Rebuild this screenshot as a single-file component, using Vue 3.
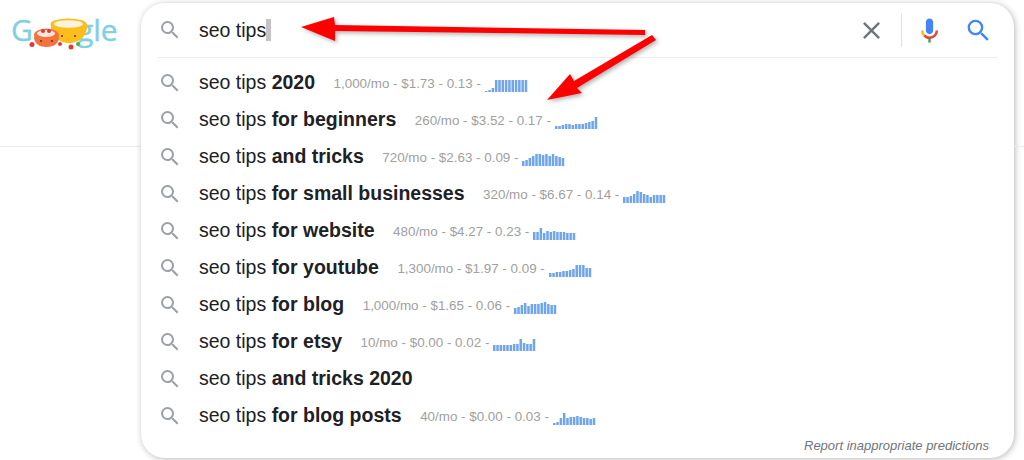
<script setup>
const searchPath = 'M15.5 14h-.79l-.28-.27A6.471 6.471 0 0 0 16 9.5 6.5 6.5 0 1 0 9.5 16c1.61 0 3.09-.59 4.23-1.57l.27.28v.79l5 4.99L20.49 19l-4.99-5zm-6 0C7.01 14 5 11.99 5 9.5S7.01 5 9.5 5 14 7.01 14 9.5 11.99 14 9.5 14z';

const rows = [
  { bold: '2020', meta: '1,000/mo - $1.73 - 0.13 -', bars: [1, 2, 4, 12, 12, 12, 12, 12, 12, 12, 12, 12, 12] },
  { bold: 'for beginners', meta: '260/mo - $3.52 - 0.17 -', bars: [3, 3, 4, 5, 5, 4, 5, 5, 5, 6, 7, 8, 12] },
  { bold: 'and tricks', meta: '720/mo - $2.63 - 0.09 -', bars: [5, 6, 8, 10, 12, 12, 11, 12, 10, 12, 10, 9, 8] },
  { bold: 'for small businesses', meta: '320/mo - $6.67 - 0.14 -', bars: [6, 6, 7, 9, 12, 11, 9, 8, 6, 8, 8, 8, 8] },
  { bold: 'for website', meta: '480/mo - $4.27 - 0.23 -', bars: [8, 8, 12, 7, 9, 8, 9, 8, 8, 8, 7, 7, 7] },
  { bold: 'for youtube', meta: '1,300/mo - $1.97 - 0.09 -', bars: [4, 4, 5, 5, 6, 6, 7, 8, 12, 12, 12, 9, 9] },
  { bold: 'for blog', meta: '1,000/mo - $1.65 - 0.06 -', bars: [6, 7, 9, 11, 8, 10, 10, 10, 11, 12, 10, 9, 9] },
  { bold: 'for etsy', meta: '10/mo - $0.00 - 0.02 -', bars: [6, 6, 6, 6, 6, 6, 7, 7, 12, 8, 7, 7, 12] },
  { bold: 'and tricks 2020' },
  { bold: 'for blog posts', meta: '40/mo - $0.00 - 0.03 -', bars: [2, 3, 7, 12, 7, 8, 8, 9, 8, 7, 7, 6, 7] },
];
</script>

<template>
  <div class="page">
    <div class="side side-left">
      <svg class="logo" width="141" height="60" viewBox="0 0 141 60">
        <text x="11" y="41" class="logo-text">G</text>
        <text x="77" y="41" class="logo-text">gle</text>
        <path d="M51 24h36c1 10-6 19-18 19s-19-9-18-19z" fill="#fdbd1c" />
        <ellipse cx="68.500" cy="24" rx="18" ry="5.500" fill="#fdbd1c" />
        <ellipse cx="68.500" cy="24" rx="14.500" ry="3.800" fill="#fdf3dc" />
        <path d="M34 37h25c0 7-6 10-12.500 10S34 44 34 37z" fill="#f4733c" />
        <ellipse cx="46.500" cy="35" rx="12.500" ry="6.500" fill="#f4733c" />
        <ellipse cx="46" cy="33.500" rx="9" ry="3.500" fill="#fbe7de" />
        <circle cx="43" cy="31" r="2" fill="#e0383c" />
        <circle cx="49" cy="31" r="2" fill="#e0383c" />
        <circle cx="32" cy="44.500" r="2.500" fill="#e0383c" />
        <circle cx="60" cy="44" r="2" fill="#e0383c" />
        <circle cx="71" cy="47" r="2.500" fill="#e0383c" />
        <circle cx="78" cy="44" r="2" fill="#4caf50" />
        <circle cx="41" cy="41" r="1" fill="#5a3320" />
        <circle cx="52" cy="41" r="1" fill="#5a3320" />
        <circle cx="62" cy="36" r="1" fill="#5a3320" />
        <circle cx="75" cy="36" r="1" fill="#5a3320" />
      </svg>
    </div>

    <div class="card">
      <div class="input-row">
        <svg class="row-icon" width="24" height="24" viewBox="0 0 24 24"><path :d="searchPath" /></svg>
        <div class="query">seo tips<span class="caret"></span></div>
        <div class="actions">
          <svg class="clear" width="29" height="29" viewBox="0 0 24 24"><path d="M19 6.410L17.590 5 12 10.590 6.410 5 5 6.410 10.590 12 5 17.590 6.410 19 12 13.410 17.590 19 19 17.590 13.410 12z" /></svg>
          <span class="action-sep"></span>
          <svg class="mic" width="29" height="29" viewBox="0 0 24 24">
            <path fill="#4285f4" d="m12 15c1.660 0 3-1.310 3-2.970v-7.020c0-1.660-1.340-3.010-3-3.010s-3 1.340-3 3.010v7.020c0 1.660 1.340 2.970 3 2.970z" />
            <path fill="#34a853" d="m11 18.080h2v3.920h-2z" />
            <path fill="#fbbc05" d="m7.050 16.870c-1.270-1.330-2.050-2.830-2.050-4.870h2c0 1.450 0.560 2.420 1.470 3.380v0.320l-1.150 1.180z" />
            <path fill="#ea4335" d="m12 16.930a4.970 5.250 0 0 1 -3.540 -1.550l-1.410 1.490c1.260 1.340 3.020 2.130 4.950 2.130 3.870 0 6.990-2.920 6.990-6.990h-2c0 2.920-2.240 4.920-4.990 4.920z" />
          </svg>
          <svg class="go" width="29" height="29" viewBox="0 0 24 24"><path :d="searchPath" /></svg>
        </div>
      </div>

      <ul class="list">
        <li v-for="row in rows" :key="row.bold" class="row">
          <svg class="row-icon" width="24" height="24" viewBox="0 0 24 24"><path :d="searchPath" /></svg>
          <span class="term">seo tips <b>{{ row.bold }}</b></span>
          <span v-if="row.meta" class="meta">{{ row.meta }}</span>
          <svg v-if="row.bars" class="spark" width="43" height="12" viewBox="0 0 43 12">
            <rect v-for="(h, i) in row.bars" :key="i" :x="i * 3.31" :y="12 - h" width="2.500" :height="h" />
          </svg>
        </li>
      </ul>

      <div class="report">Report inappropriate predictions</div>
    </div>

    <div class="side"></div>

    <svg class="arrows" width="1024" height="460" viewBox="0 0 1024 460">
      <polygon points="301,27 334,17 335,25 645,30 645,35 335,31 335,41" />
      <polygon points="547,100 570,74 574,81 652,35 656,40 577,88 582,93" />
    </svg>
  </div>
</template>

<style>
html, body {
  background: #fff;
}
</style>

<style scoped>
.page {
  position: relative;
  display: flex;
  width: 1024px;
  height: 460px;
  overflow: hidden;
  background: #fff;
  font-family: "Liberation Sans", Arial, sans-serif;
}
.side {
  flex: 1;
  height: 146px;
  border-bottom: 1px solid #ebebeb;
}
.side-left {
  flex: none;
  width: 141px;
}
.logo {
  display: block;
}
.logo-text {
  font-family: "Open Sans", sans-serif;
  font-size: 30px;
  fill: #7fd0e2;
  stroke: #7fd0e2;
  stroke-width: 0.4px;
}
.card {
  flex: none;
  display: flex;
  flex-direction: column;
  width: 873px;
  height: 455px;
  margin-top: 3px;
  border-radius: 24px;
  background: #fff;
  box-shadow: 1px 1px 6px rgba(32, 33, 36, 0.32);
}
.input-row {
  display: flex;
  align-items: center;
  height: 54px;
  margin: 0 16px 0 17px;
  border-bottom: 1px solid #eee;
}
.row-icon {
  flex: none;
  fill: #9aa0a6;
}
.query {
  display: flex;
  align-items: center;
  margin-left: 17px;
  font-size: 19.500px;
  color: #202124;
}
.caret {
  width: 5px;
  height: 22px;
  background: #c4c4c4;
}
.actions {
  display: flex;
  align-items: center;
  margin-left: auto;
  padding-right: 5px;
}
.clear {
  fill: #70757a;
}
.action-sep {
  width: 1px;
  height: 34px;
  margin: 0 13px 0 15px;
  background: #dfe1e5;
}
.go {
  margin-left: 20px;
  fill: #4285f4;
}
.list {
  list-style: none;
  margin: 6px 0 0;
  padding: 0;
}
.row {
  display: flex;
  align-items: center;
  height: 37px;
  padding-left: 17px;
}
.term {
  margin-left: 17px;
  font-size: 19.500px;
  color: #202124;
  white-space: pre;
}
.term b {
  color: #202124;
}
.meta {
  margin: 2px 0 0 18.500px;
  font-size: 13.400px;
  color: #a0a0a0;
}
.spark {
  flex: none;
  margin: 6px 0 0 4px;
  fill: #6fa5ee;
}
.report {
  margin-top: auto;
  padding: 0 25px 5px 0;
  text-align: right;
  font-size: 13px;
  font-style: italic;
  color: #70757a;
}
.arrows {
  position: absolute;
  left: 0;
  top: 0;
  pointer-events: none;
  filter: drop-shadow(2px 2px 2px rgba(0, 0, 0, 0.3));
}
.arrows polygon {
  fill: #f00;
}
</style>
